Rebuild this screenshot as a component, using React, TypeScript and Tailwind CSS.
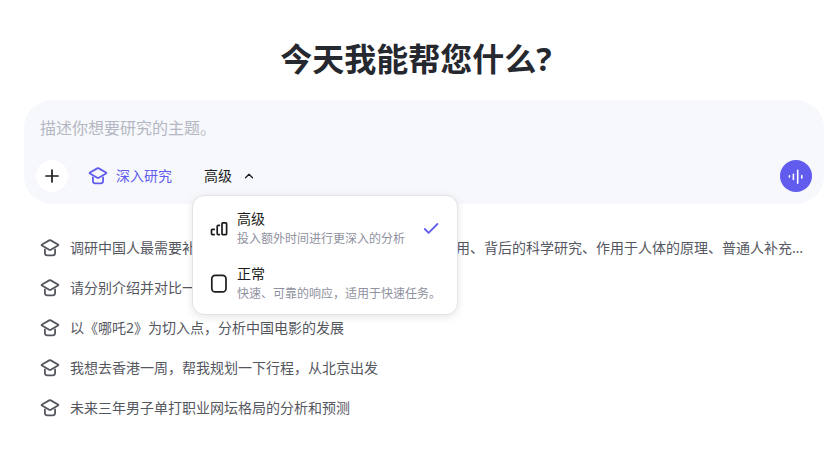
import { useState } from "react";

const suggestions = [
  "调研中国人最需要补充的5类营养素，列出每类营养素各自的作用、背后的科学研究、作用于人体的原理、普通人补充的建议剂量",
  "请分别介绍并对比一下主流的新能源汽车",
  "以《哪吒2》为切入点，分析中国电影的发展",
  "我想去香港一周，帮我规划一下行程，从北京出发",
  "未来三年男子单打职业网坛格局的分析和预测",
];

const modes = [
  { id: "advanced", label: "高级", hint: "投入额外时间进行更深入的分析", Icon: BarsIcon },
  { id: "normal", label: "正常", hint: "快速、可靠的响应，适用于快速任务。", Icon: BoxIcon },
];

function CapIcon() {
  return (
    <svg width="20" height="20" viewBox="0 0 20 20" fill="none" stroke="currentColor" strokeWidth="1.8" strokeLinejoin="round" strokeLinecap="round" className="shrink-0" aria-hidden="true">
      <path d="M9.2 2.4 2 6.5q-.8.5 0 1l7.2 4.3q.8.4 1.6 0L18 7.5q.8-.5 0-1l-7.2-4.1q-.8-.4-1.6 0Z" />
      <path d="M4.9 11.4v3.7q0 2.2 2.2 2.2h5.8q2.2 0 2.2-2.2v-3.7" />
    </svg>
  );
}

function BarsIcon() {
  return (
    <svg width="20" height="20" viewBox="0 0 20 20" fill="none" stroke="currentColor" strokeWidth="1.7" strokeLinejoin="round" strokeLinecap="round" className="shrink-0" aria-hidden="true">
      <rect x="13" y="3.8" width="4.6" height="11.8" rx="0.8" />
      <path d="M10.4 6.4H9.3q-1.1 0-1.1 1.1v7q0 1.1 1.1 1.1h1.1" />
      <path d="M5.2 10.4H3.6q-1.1 0-1.1 1.1v3q0 1.1 1.1 1.1h1.6" />
    </svg>
  );
}

function BoxIcon() {
  return (
    <svg width="20" height="20" viewBox="0 0 20 20" fill="none" stroke="currentColor" strokeWidth="1.7" className="shrink-0" aria-hidden="true">
      <rect x="2.8" y="1.4" width="14.2" height="16.4" rx="3.4" />
    </svg>
  );
}

function PlusIcon() {
  return (
    <svg width="16" height="16" viewBox="0 0 16 16" fill="none" stroke="currentColor" strokeWidth="1.7" strokeLinecap="round" aria-hidden="true">
      <path d="M8 2v12M2 8h12" />
    </svg>
  );
}

function ChevronUpIcon() {
  return (
    <svg width="10" height="10" viewBox="0 0 10 10" fill="none" stroke="currentColor" strokeWidth="1.3" strokeLinecap="round" strokeLinejoin="round" aria-hidden="true">
      <path d="m1.5 6.8 3.5-3.5 3.5 3.5" />
    </svg>
  );
}

function CheckIcon() {
  return (
    <svg width="16" height="16" viewBox="0 0 16 16" fill="none" stroke="currentColor" strokeWidth="1.8" strokeLinecap="round" strokeLinejoin="round" className="shrink-0" aria-hidden="true">
      <path d="m1.8 8 3.8 3.8L14.4 3" />
    </svg>
  );
}

function VoiceIcon() {
  return (
    <svg width="16" height="16" viewBox="0 0 16 16" fill="none" stroke="currentColor" strokeWidth="1.6" strokeLinecap="round" aria-hidden="true">
      <path d="M1.4 7.9v1M5.4 6.2v5.2M9.7 2.2v13M13.8 7.6v2.4" />
    </svg>
  );
}

export default function App() {
  const [mode, setMode] = useState("advanced");
  const [open, setOpen] = useState(true);
  const current = modes.find((m) => m.id === mode) ?? modes[0];

  return (
    <main className="min-h-screen bg-white pt-[35px] pr-3.5 pb-10 pl-6 font-['Noto_Sans','Noto_Sans_CJK_SC',sans-serif]" lang="zh-CN">
      <h1 className="pr-4 text-center text-[32px] leading-12 font-bold text-[#26282f]">今天我能帮您什么?</h1>

      {/* prompt box */}
      <form className="mt-[17px] rounded-[28px] bg-[#f7f8fc] px-3 pt-4 pb-3" onSubmit={(e) => e.preventDefault()}>
        <input
          type="text"
          aria-label="研究主题"
          placeholder="描述你想要研究的主题。"
          className="block h-6 w-full bg-transparent px-1 text-base text-[#26282f] outline-none placeholder:text-[#b4b7c3]"
        />
        <div className="mt-5 flex items-center">
          <button type="button" aria-label="添加" className="flex size-8 items-center justify-center rounded-full bg-white text-[#1b1c20]">
            <PlusIcon />
          </button>
          <button type="button" className="ml-5 flex items-center gap-2 text-sm text-[#615ced]">
            <CapIcon />
            深入研究
          </button>
          <div className="relative ml-8">
            <button
              type="button"
              aria-expanded={open}
              onClick={() => setOpen(!open)}
              className="flex items-center gap-3 text-sm text-[#1b1c20]"
            >
              {current.label}
              <ChevronUpIcon />
            </button>

            {/* mode menu */}
            {open && (
              <div role="menu" className="absolute top-full -left-3 z-10 mt-[9px] rounded-xl border border-[#e2e3e8] bg-white px-1 pt-[5px] pb-[3px] whitespace-nowrap shadow-[0_2px_8px_rgba(0,0,0,0.1)]">
                {modes.map(({ id, label, hint, Icon }) => (
                  <button
                    key={id}
                    type="button"
                    role="menuitemradio"
                    aria-checked={id === mode}
                    onClick={() => setMode(id)}
                    className="flex w-full items-center gap-2 rounded-lg px-3 py-2 text-left text-[#1b1c20]"
                  >
                    <Icon />
                    <span className="flex-1">
                      <span className="block text-sm leading-5">{label}</span>
                      <span className="block text-xs leading-[19px] text-[#8f91a0]">{hint}</span>
                    </span>
                    {id === mode && (
                      <span className="pr-0.5 text-[#615ced]">
                        <CheckIcon />
                      </span>
                    )}
                  </button>
                ))}
              </div>
            )}
          </div>
          <button type="button" aria-label="语音输入" className="ml-auto flex size-8 items-center justify-center rounded-full bg-[#615ced] text-white">
            <VoiceIcon />
          </button>
        </div>
      </form>

      {/* suggestions */}
      <ul className="mt-6 px-4">
        {suggestions.map((text) => (
          <li key={text}>
            <button type="button" className="flex h-10 w-full items-center gap-2.5 text-left text-sm text-[#55575f]">
              <CapIcon />
              <span className="truncate">{text}</span>
            </button>
          </li>
        ))}
      </ul>
    </main>
  );
}
